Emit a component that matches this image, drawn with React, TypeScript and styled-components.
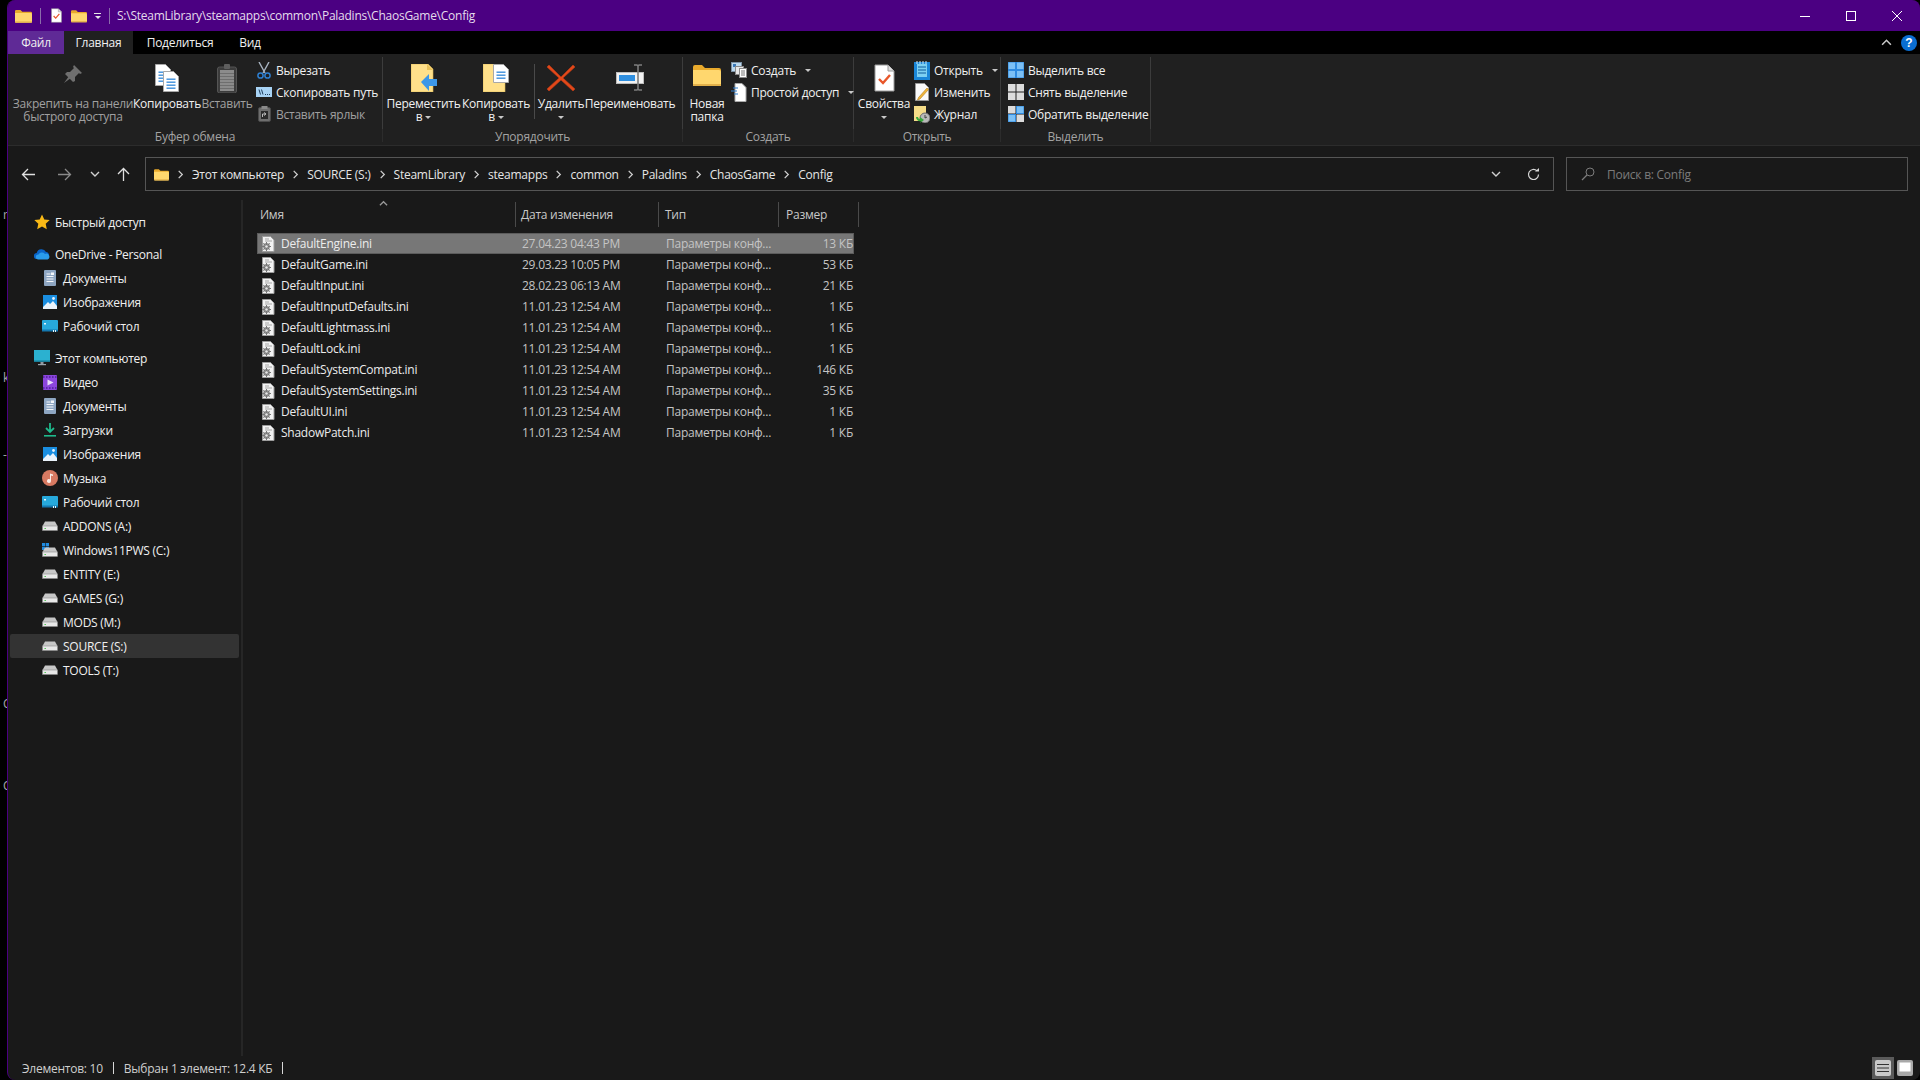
import styled, { createGlobalStyle } from "styled-components";
import type { ReactNode } from "react";

const GlobalStyle = createGlobalStyle`
  html, body {
    margin: 0;
    width: 1920px;
    height: 1080px;
    overflow: hidden;
    background: #000;
    font-family: "Open Sans", "Noto Sans", "Liberation Sans", sans-serif;
    font-size: 12px;
    letter-spacing: -0.25px;
    color: #e6e6e6;
  }
`;

/* ---------- icons ---------- */

const Glyph = styled.svg`
  display: block;
  flex-shrink: 0;
`;

const Icon = ({ w, h, children }: { w: number; h: number; children: ReactNode }) => (
  <Glyph width={w} height={h} viewBox={`0 0 ${w} ${h}`}>
    {children}
  </Glyph>
);

const FolderIcon = ({ w = 17, h = 14 }: { w?: number; h?: number }) => (
  <Glyph width={w} height={h} viewBox="0 0 28 22">
    <path d="M0 3a2 2 0 0 1 2-2h7l3 3h14a2 2 0 0 1 2 2v2H0z" fill="#e8a92c" />
    <path d="M0 6h26a2 2 0 0 1 2 2v12a2 2 0 0 1-2 2H2a2 2 0 0 1-2-2z" fill="#ffd76e" />
    <rect y="20" width="28" height="2" fill="#e2b04a" />
  </Glyph>
);

const DocCheckIcon = ({ w, h }: { w: number; h: number }) => (
  <Glyph width={w} height={h} viewBox="0 0 21 28">
    <path d="M1 1h13l6 6v20H1z" fill="#fff" stroke="#9a9a9a" />
    <path d="M14 1v6h6" fill="#ddd" stroke="#9a9a9a" />
    <path d="M5 15l4 4 7-8" fill="none" stroke="#e8562a" strokeWidth="2.4" />
  </Glyph>
);

const PinIcon = () => (
  <Icon w={20} h={20}>
    <path d="M11 1l8 8-2 1-1-1-4 4 0 4-2 1-8-8 2-2 3 0 4-4-1-1z" fill="#6f6f6f" />
    <path d="M6 12l-5 7 7-5z" fill="#6f6f6f" />
  </Icon>
);

const DocLines = ({ x, y, w, h }: { x: number; y: number; w: number; h: number }) => (
  <g>
    <path d={`M${x} ${y}h${w - 5}l5 5v${h - 5}h-${w}z`} fill="#fff" stroke="#a8a8a8" />
    {[7, 10, 13, 16, 19, 22, 25].filter((d) => d < h - 2).map((d) => (
      <rect key={d} x={x + 3} y={y + d} width={w - 6} height="1.4" fill="#3f8fdc" />
    ))}
  </g>
);

const CopyIcon = () => (
  <Icon w={24} h={28}>
    <DocLines x={0.5} y={0.5} w={15} h={21} />
    <DocLines x={8.5} y={7.5} w={15} h={20} />
  </Icon>
);

const ClipboardIcon = () => (
  <Icon w={20} h={29}>
    <rect x="0.5" y="3" width="19" height="26" rx="2" fill="#3c3c3c" stroke="#555" />
    <rect x="3" y="6" width="14" height="21" fill="#8b8b8b" />
    {[9, 12, 15, 18, 21, 24].map((y) => (
      <rect key={y} x="3" y={y} width="14" height="1" fill="#6e6e6e" />
    ))}
    <rect x="7" y="0" width="6" height="5" rx="1" fill="#5e5e5e" />
  </Icon>
);

const ScissorsIcon = () => (
  <Icon w={14} h={17}>
    <path d="M2 0l6 11M12 0L6 11" stroke="#a9b4c2" strokeWidth="1.4" fill="none" />
    <circle cx="3.5" cy="13.5" r="2.6" fill="none" stroke="#2e7fd0" strokeWidth="1.5" />
    <circle cx="10.5" cy="13.5" r="2.6" fill="none" stroke="#2e7fd0" strokeWidth="1.5" />
  </Icon>
);

const CopyPathIcon = () => (
  <Icon w={16} h={10}>
    <rect width="16" height="10" fill="#a8d3f5" />
    <path d="M3 2.5l1.5 5M5.5 2.5l1.5 5" stroke="#1d3d5c" strokeWidth="1" />
    <path d="M9 7.5h1M11 7.5h1M13 7.5h1" stroke="#1d3d5c" strokeWidth="1" />
  </Icon>
);

const ShortcutPasteIcon = () => (
  <Icon w={13} h={16}>
    <rect x="0.5" y="1.5" width="12" height="14" rx="1.5" fill="#6e6e6e" stroke="#4a4a4a" />
    <rect x="3.5" y="0" width="6" height="3" fill="#8a8a8a" />
    <rect x="3" y="5" width="7" height="8" fill="#2b2b2b" />
    <path d="M4.5 11V8h3M6 6.5L8 8 6 9.5" stroke="#bbb" fill="none" />
  </Icon>
);

const YellowDoc = () => (
  <path d="M0 0h17l5 5v23H0z" fill="#ffe08a" stroke="#d9b552" strokeWidth="0.6" />
);

const MoveToIcon = () => (
  <Icon w={26} h={28}>
    <YellowDoc />
    <path d="M16 0v6h6" fill="#e9c25a" />
    <path d="M10 18l8-8v5h8v7h-8v5z" fill="#3c97e8" />
  </Icon>
);

const CopyToIcon = () => (
  <Icon w={26} h={28}>
    <YellowDoc />
    <DocLines x={10.5} y={0.5} w={15} h={18} />
  </Icon>
);

const DeleteIcon = () => (
  <Icon w={28} h={28}>
    <path d="M2 1l12 12L26 1l2 2-12 11 12 11-2 2-12-11L2 27l-2-2 12-11L0 3z" fill="#e2481a" stroke="#c23c14" strokeWidth="0.6" />
  </Icon>
);

const RenameIcon = () => (
  <Icon w={28} h={27}>
    <rect x="0.5" y="8.5" width="27" height="11" fill="#f2f2f2" stroke="#bdbdbd" />
    <rect x="3" y="11" width="16" height="6" fill="#2f8fe0" />
    <path d="M18 1h3l1 1 1-1h3M22 2v23M18 26h3l1-1 1 1h3" stroke="#7d7d7d" strokeWidth="1.6" fill="none" />
  </Icon>
);

const NewItemIcon = () => (
  <Icon w={16} h={16}>
    <rect x="0.5" y="0.5" width="10" height="9" fill="#bcd9ee" stroke="#7e93a5" />
    <rect x="2" y="2" width="3" height="3" fill="#3a78b8" />
    <rect x="4.5" y="4.5" width="8" height="8" fill="#e8e8e8" stroke="#8a8a8a" />
    <rect x="8.5" y="6.5" width="7" height="9" fill="#fff" stroke="#8a8a8a" />
    <path d="M10 9h4M10 11h4M10 13h4" stroke="#777" />
  </Icon>
);

const EasyAccessIcon = () => (
  <Icon w={16} h={19}>
    <path d="M4 0.5h7l4 4v14H4z" fill="#fff" stroke="#aaa" />
    <path d="M2 5h5M0 8h6M3 11h4" stroke="#2e7fd0" strokeWidth="1.2" />
  </Icon>
);

const OpenIcon = () => (
  <Icon w={16} h={19}>
    <rect y="1" width="16" height="18" fill="#1a86d8" />
    <rect x="3" y="3" width="10" height="13" fill="#7dd0f2" />
    <path d="M4 6h8M4 9h8M4 12h8" stroke="#0f5c9e" />
    <path d="M3 0v3M6 0v3M9 0v3M12 0v3" stroke="#cfe8f8" />
  </Icon>
);

const EditIcon = () => (
  <Icon w={14} h={18}>
    <path d="M0.5 0.5h9l4 4v13h-13z" fill="#fafafa" stroke="#9a9a9a" />
    <path d="M12 5l1.5 1.5L5 16l-2.5 1 1-2.5z" fill="#f1b63b" stroke="#b07e1f" strokeWidth="0.6" />
  </Icon>
);

const HistoryIcon = () => (
  <Icon w={16} h={17}>
    <rect x="0" y="0" width="12" height="15" fill="#f5dc88" />
    <circle cx="11" cy="12" r="5" fill="#b9b9b9" stroke="#6b6b6b" />
    <path d="M11 9v3l2-1" stroke="#444" fill="none" />
    <path d="M2 11a4 4 0 0 0 5 4l-1 2 4-3-4-3 0 2a2 2 0 0 1-2-2z" fill="#37a83a" />
  </Icon>
);

const GridIcon = ({ cells }: { cells: string[] }) => (
  <Icon w={16} h={16}>
    {cells.map((c, i) => (
      <rect key={i} x={(i % 2) * 8.5} y={Math.floor(i / 2) * 8.5} width="7.5" height="7.5" fill={c} stroke={c === "#dcdcdc" ? "none" : "#2e8ae0"} />
    ))}
  </Icon>
);

const Caret = styled.span`
  display: inline-block;
  width: 0;
  height: 0;
  border-left: 3px solid transparent;
  border-right: 3px solid transparent;
  border-top: 3px solid #c8c8c8;
  margin-left: 5px;
  vertical-align: 2px;
`;

const BigCaret = styled(Caret)`
  margin-left: 0;
`;

const ChevronGlyph = ({ dir, size = 10, color = "#d0d0d0" }: { dir: "right" | "down" | "up"; size?: number; color?: string }) => {
  const d = dir === "right" ? "M3 1l4 4-4 4" : dir === "down" ? "M1 3l4 4 4-4" : "M1 7l4-4 4 4";
  return (
    <Glyph width={size} height={size} viewBox="0 0 10 10">
      <path d={d} fill="none" stroke={color} strokeWidth="1.4" />
    </Glyph>
  );
};

const ArrowGlyph = ({ dir, color }: { dir: "left" | "right" | "up"; color: string }) => {
  const d =
    dir === "left"
      ? "M14 7.5H2M7 2L1.5 7.5 7 13"
      : dir === "right"
        ? "M1 7.5h12M8 2l5.5 5.5L8 13"
        : "M7.5 14V2M2 7l5.5-5.5L13 7";
  return (
    <Glyph width={15} height={15} viewBox="0 0 15 15">
      <path d={d} fill="none" stroke={color} strokeWidth="1.3" />
    </Glyph>
  );
};

const StarIcon = () => (
  <Icon w={16} h={16}>
    <path d="M8 0.5l2.3 5 5.4.6-4 3.7 1.1 5.4L8 12.5l-4.8 2.7 1.1-5.4-4-3.7 5.4-.6z" fill="#f9b916" />
  </Icon>
);

const CloudIcon = () => (
  <Icon w={16} h={12}>
    <path d="M3 11a3 3 0 0 1-.3-6A5 5 0 0 1 12 4a3.6 3.6 0 0 1 .6 7z" fill="#0a64c8" />
    <path d="M4 11.5a2.5 2.5 0 0 1 .5-5A4 4 0 0 1 11 6a2.8 2.8 0 0 1 2.6 5.5z" fill="#2a9bea" />
  </Icon>
);

const DocsIcon = () => (
  <Icon w={12} h={16}>
    <rect width="12" height="16" rx="1" fill="#8ea6c2" />
    <path d="M2.5 4h4M2.5 6.5h7M2.5 9h7M2.5 11.5h7" stroke="#f4f6f9" strokeWidth="1.1" />
    <rect x="7" y="2.5" width="3" height="2.5" fill="#f4f6f9" />
  </Icon>
);

const PicturesIcon = () => (
  <Icon w={14} h={14}>
    <rect width="14" height="14" fill="#1a8ee0" />
    <path d="M0 14V12l5-5 2 2 3-3 4 5v3z" fill="#eaf3fb" />
    <circle cx="10.5" cy="3.5" r="1.4" fill="#eaf3fb" />
  </Icon>
);

const DesktopIcon = () => (
  <Icon w={16} h={12}>
    <rect width="16" height="11" rx="1" fill="#27a9dc" />
    <rect y="9.5" width="16" height="2" fill="#1478b0" />
    <rect x="2" y="3" width="2" height="1.5" fill="#e6f6fc" />
    <rect x="11" y="10" width="1" height="2" fill="#e6f6fc" />
    <rect x="13" y="10" width="1" height="2" fill="#e6f6fc" />
  </Icon>
);

const MonitorIcon = () => (
  <Icon w={16} h={16}>
    <rect width="16" height="11.5" fill="#2bb1d0" />
    <rect y="10.5" width="16" height="1.5" fill="#177c96" />
    <rect x="6.5" y="12" width="3" height="2.5" fill="#8f9aa3" />
    <rect x="4" y="14" width="8" height="1.2" fill="#9aa4ac" />
  </Icon>
);

const VideoIcon = () => (
  <Icon w={14} h={15}>
    <rect width="14" height="15" rx="1" fill="#8b46dc" />
    <path d="M0 2h14M0 13h14" stroke="#4f1f96" strokeDasharray="1.5 1.5" strokeWidth="1.4" />
    <path d="M4.5 4.5v6l6-3z" fill="#e9ddf8" />
  </Icon>
);

const DownloadIcon = () => (
  <Icon w={12} h={14}>
    <path d="M6 0v9M2 5l4 4 4-4" stroke="#1fb98c" strokeWidth="1.8" fill="none" />
    <rect y="12" width="12" height="1.6" fill="#1fb98c" />
  </Icon>
);

const MusicIcon = () => (
  <Icon w={16} h={16}>
    <circle cx="8" cy="8" r="8" fill="#d87a62" />
    <path d="M8 3.5l3 1v1.6L9 5.5V11a2 2 0 1 1-1-1.7z" fill="#fbeee9" />
  </Icon>
);

const DriveIcon = ({ system }: { system?: boolean }) => (
  <Icon w={16} h={system ? 14 : 10}>
    {system && (
      <g fill="#1f8be0">
        <rect x="0" y="0" width="3.2" height="3.2" />
        <rect x="3.8" y="0" width="3.2" height="3.2" />
        <rect x="0" y="3.8" width="3.2" height="3.2" />
        <rect x="3.8" y="3.8" width="3.2" height="3.2" />
      </g>
    )}
    <g transform={system ? "translate(0 4)" : undefined}>
      <path d="M3 0.5h10L15.5 5v0H.5z" fill="#c7c7c7" />
      <rect x="0.5" y="5" width="15" height="4.5" fill="#e8e8e8" stroke="#8a8a8a" strokeWidth="0.6" />
      <rect x="2.5" y="7" width="1.4" height="1" fill="#47c24d" />
    </g>
  </Icon>
);

const IniIcon = () => (
  <Icon w={14} h={16}>
    <path d="M1.5 0.5h8l3.5 3.5v11.5H1.5z" fill="#f2f2f2" stroke="#9c9c9c" />
    <path d="M4 3h4M4 5h7" stroke="#a6a6a6" />
    <circle cx="5.5" cy="10.5" r="3.4" fill="#8d8d8d" />
    <circle cx="5.5" cy="10.5" r="1.3" fill="#e8e8e8" />
    <path d="M5.5 6v9M1 10.5h9M2.3 7.3l6.4 6.4M8.7 7.3l-6.4 6.4" stroke="#777" />
    <circle cx="5.5" cy="10.5" r="1.3" fill="#e8e8e8" />
  </Icon>
);

/* ---------- desktop shell ---------- */

const Desktop = styled.div`
  display: flex;
  width: 1920px;
  height: 1080px;
  background: #000;
`;

const BehindStrip = styled.div`
  width: 7px;
  flex-shrink: 0;
  overflow: hidden;
  display: flex;
  flex-direction: column;
`;

const StrayMark = styled.span<{ $gap: number }>`
  display: block;
  height: 14px;
  line-height: 14px;
  margin-top: ${(p) => p.$gap}px;
  padding-left: 3px;
  color: #a8a8a8;
  font-size: 12px;
`;

const Window = styled.div`
  flex: 1;
  min-width: 0;
  display: flex;
  flex-direction: column;
  background: #191919;
  border-left: 1px solid #4b0082;
  border-radius: 8px 8px 8px 8px;
  overflow: hidden;
`;

/* ---------- title bar ---------- */

const TitleBar = styled.div`
  height: 31px;
  flex-shrink: 0;
  display: flex;
  align-items: center;
  background: #4b0082;
  color: #e4dcec;
`;

const QuickSlot = styled.div<{ $ml: number }>`
  margin-left: ${(p) => p.$ml}px;
  display: flex;
  align-items: center;
`;

const QuickSep = styled.div<{ $ml: number }>`
  width: 1px;
  height: 16px;
  background: #8a6cab;
  margin-left: ${(p) => p.$ml}px;
`;

const QuickDrop = styled.div`
  width: 7px;
  margin-left: 7px;
  border-top: 1px solid #e6e6e6;
  padding-top: 2px;
  display: flex;
  justify-content: center;
  &::after {
    content: "";
    border-left: 3px solid transparent;
    border-right: 3px solid transparent;
    border-top: 3px solid #e6e6e6;
  }
`;

const TitleText = styled.span`
  margin-left: 7px;
  font-size: 12px;
`;

const WindowControls = styled.div`
  margin-left: auto;
  display: flex;
  height: 100%;
`;

const ControlButton = styled.div`
  width: 46px;
  display: flex;
  align-items: center;
  justify-content: center;
`;

/* ---------- tabs ---------- */

const TabRow = styled.div`
  height: 23px;
  flex-shrink: 0;
  display: flex;
  align-items: center;
  background: #000;
`;

const Tab = styled.div<{ $w: number; $kind?: "file" | "active" }>`
  width: ${(p) => p.$w}px;
  height: 100%;
  display: flex;
  align-items: center;
  justify-content: center;
  color: #f0f0f0;
  background: ${(p) => (p.$kind === "file" ? "#5f2a96" : p.$kind === "active" ? "#202020" : "transparent")};
`;

const TabRight = styled.div`
  margin-left: auto;
  padding-right: 3px;
  display: flex;
  align-items: center;
  gap: 9px;
`;

const HelpBadge = styled.div`
  width: 16px;
  height: 16px;
  border-radius: 50%;
  background: #0a6ed1;
  color: #fff;
  font: bold 12px/16px "Liberation Sans", sans-serif;
  letter-spacing: 0;
  text-align: center;
`;

/* ---------- ribbon ---------- */

const Ribbon = styled.div`
  height: 92px;
  box-sizing: border-box;
  flex-shrink: 0;
  display: flex;
  padding-top: 3px;
  background: #202020;
  border-bottom: 1px solid #2c2c2c;
`;

const Group = styled.div<{ $w: number }>`
  width: ${(p) => p.$w}px;
  height: 85px;
  display: flex;
  flex-direction: column;
`;

const GroupBody = styled.div<{ $pl?: number }>`
  height: 72px;
  box-sizing: border-box;
  padding-left: ${(p) => p.$pl ?? 0}px;
  display: flex;
  border-right: 1px solid #3c3c3c;
`;

const GroupLabel = styled.div`
  height: 13px;
  line-height: 16px;
  text-align: center;
  color: #a3a3a3;
  border-right: 1px solid #2c2c2c;
`;

const BigButton = styled.div<{ $w: number; $dim?: boolean }>`
  width: ${(p) => p.$w}px;
  flex-shrink: 0;
  display: flex;
  flex-direction: column;
  align-items: center;
  color: ${(p) => (p.$dim ? "#a0a0a0" : "#f0f0f0")};
`;

const BigIconSlot = styled.div`
  height: 40px;
  box-sizing: border-box;
  padding-top: 7px;
`;

const BigLabel = styled.div`
  line-height: 13px;
  text-align: center;
  white-space: nowrap;
`;

const RibbonDivider = styled.div`
  width: 1px;
  height: 55px;
  margin: 7px 3px 0;
  background: #4a4a4a;
  flex-shrink: 0;
`;

const SmallColumn = styled.div<{ $ml?: number }>`
  margin-left: ${(p) => p.$ml ?? 0}px;
  padding-top: 2px;
  display: flex;
  flex-direction: column;
`;

const SmallItem = styled.div<{ $dim?: boolean }>`
  height: 22px;
  display: flex;
  align-items: center;
  gap: 4px;
  white-space: nowrap;
  color: ${(p) => (p.$dim ? "#a0a0a0" : "#f0f0f0")};
`;

const SmallIconSlot = styled.div`
  width: 16px;
  display: flex;
  justify-content: center;
`;

/* ---------- navigation ---------- */

const NavBar = styled.div`
  height: 54px;
  box-sizing: border-box;
  flex-shrink: 0;
  padding: 11px 12px 9px 0;
  display: flex;
  align-items: center;
`;

const NavButton = styled.div<{ $w: number }>`
  width: ${(p) => p.$w}px;
  display: flex;
  justify-content: center;
  flex-shrink: 0;
`;

const AddressBox = styled.div`
  flex: 1;
  height: 34px;
  box-sizing: border-box;
  margin-left: 9px;
  padding-left: 8px;
  display: flex;
  align-items: center;
  border: 1px solid #555;
`;

const CrumbSep = styled.div`
  width: 23px;
  display: flex;
  justify-content: center;
`;

const Crumb = styled.span`
  color: #e6e6e6;
  white-space: nowrap;
`;

const AddressEnd = styled.div`
  margin-left: auto;
  display: flex;
  align-items: center;
`;

const AddressEndButton = styled.div<{ $w: number }>`
  width: ${(p) => p.$w}px;
  display: flex;
  justify-content: center;
`;

const SearchBox = styled.div`
  width: 342px;
  height: 34px;
  box-sizing: border-box;
  margin-left: 12px;
  padding-left: 14px;
  display: flex;
  align-items: center;
  gap: 12px;
  border: 1px solid #555;
  color: #7c7c7c;
`;

/* ---------- body ---------- */

const Body = styled.div`
  flex: 1;
  min-height: 0;
  display: flex;
`;

const Sidebar = styled.div`
  width: 233px;
  box-sizing: content-box;
  flex-shrink: 0;
  padding: 10px 0 0;
  border-right: 2px solid #262626;
`;

const NavSection = styled.div`
  margin-bottom: 8px;
  padding: 0 2px;
`;

const NavRow = styled.div<{ $child?: boolean; $selected?: boolean }>`
  height: 24px;
  display: flex;
  align-items: center;
  gap: 5px;
  padding-left: ${(p) => (p.$child ? 32 : 24)}px;
  border-radius: 2px;
  white-space: nowrap;
  color: #f0f0f0;
  background: ${(p) => (p.$selected ? "#333" : "transparent")};
`;

const NavIconSlot = styled.div`
  width: 16px;
  display: flex;
  justify-content: center;
`;

const ListPane = styled.div`
  flex: 1;
  min-width: 0;
  padding: 2px 0 0 14px;
`;

const ListHeader = styled.div`
  display: grid;
  grid-template-columns: 259px 143px 120px 80px;
  width: 602px;
  height: 25px;
`;

const HeaderCell = styled.div<{ $pad: number }>`
  position: relative;
  padding-left: ${(p) => p.$pad}px;
  display: flex;
  align-items: center;
  color: #c8c8c8;
  border-right: 1px solid #4a4a4a;
`;

const SortArrow = styled.div`
  position: absolute;
  left: 122px;
  top: -3px;
`;

const Rows = styled.div`
  margin-top: 6px;
  width: 597px;
`;

const FileRow = styled.div<{ $selected?: boolean }>`
  display: grid;
  grid-template-columns: 259px 144px 120px 74px;
  height: 21px;
  box-sizing: border-box;
  align-items: center;
  white-space: nowrap;
  background: ${(p) => (p.$selected ? "#777" : "transparent")};
  border: 1px solid ${(p) => (p.$selected ? "#5c5c5c" : "transparent")};
`;

const NameCell = styled.div`
  display: flex;
  align-items: center;
  gap: 6px;
  padding-left: 3px;
  color: #ececec;
`;

const FileMeta = styled.div`
  padding-left: 5px;
  color: #c4c4c4;
`;

const FileSize = styled.div`
  padding-right: 2px;
  text-align: right;
  color: #c4c4c4;
`;

/* ---------- status ---------- */

const StatusBar = styled.div`
  height: 24px;
  flex-shrink: 0;
  padding: 0 7px 0 14px;
  display: flex;
  align-items: center;
  color: #cfcfcf;
`;

const StatusDivider = styled.div`
  width: 1px;
  height: 12px;
  margin: 0 10px;
  background: #d8d8d8;
`;

const ViewButtons = styled.div`
  margin-left: auto;
  display: flex;
  align-items: center;
  gap: 3px;
`;

const ViewButton = styled.div<{ $active?: boolean }>`
  width: ${(p) => (p.$active ? 22 : 16)}px;
  height: ${(p) => (p.$active ? 22 : 16)}px;
  display: flex;
  align-items: center;
  justify-content: center;
  background: ${(p) => (p.$active ? "#5a5a5a" : "transparent")};
`;

/* ---------- data ---------- */

type NavItem = { label: string; icon: ReactNode; selected?: boolean };

const drive = <DriveIcon />;

const NAV_SECTIONS: { head: NavItem; children: NavItem[] }[] = [
  { head: { label: "Быстрый доступ", icon: <StarIcon /> }, children: [] },
  {
    head: { label: "OneDrive - Personal", icon: <CloudIcon /> },
    children: [
      { label: "Документы", icon: <DocsIcon /> },
      { label: "Изображения", icon: <PicturesIcon /> },
      { label: "Рабочий стол", icon: <DesktopIcon /> },
    ],
  },
  {
    head: { label: "Этот компьютер", icon: <MonitorIcon /> },
    children: [
      { label: "Видео", icon: <VideoIcon /> },
      { label: "Документы", icon: <DocsIcon /> },
      { label: "Загрузки", icon: <DownloadIcon /> },
      { label: "Изображения", icon: <PicturesIcon /> },
      { label: "Музыка", icon: <MusicIcon /> },
      { label: "Рабочий стол", icon: <DesktopIcon /> },
      { label: "ADDONS (A:)", icon: drive },
      { label: "Windows11PWS (C:)", icon: <DriveIcon system /> },
      { label: "ENTITY (E:)", icon: drive },
      { label: "GAMES (G:)", icon: drive },
      { label: "MODS (M:)", icon: drive },
      { label: "SOURCE (S:)", icon: drive, selected: true },
      { label: "TOOLS (T:)", icon: drive },
    ],
  },
];

const FILES = [
  { name: "DefaultEngine.ini", date: "27.04.23 04:43 PM", size: "13 КБ" },
  { name: "DefaultGame.ini", date: "29.03.23 10:05 PM", size: "53 КБ" },
  { name: "DefaultInput.ini", date: "28.02.23 06:13 AM", size: "21 КБ" },
  { name: "DefaultInputDefaults.ini", date: "11.01.23 12:54 AM", size: "1 КБ" },
  { name: "DefaultLightmass.ini", date: "11.01.23 12:54 AM", size: "1 КБ" },
  { name: "DefaultLock.ini", date: "11.01.23 12:54 AM", size: "1 КБ" },
  { name: "DefaultSystemCompat.ini", date: "11.01.23 12:54 AM", size: "146 КБ" },
  { name: "DefaultSystemSettings.ini", date: "11.01.23 12:54 AM", size: "35 КБ" },
  { name: "DefaultUI.ini", date: "11.01.23 12:54 AM", size: "1 КБ" },
  { name: "ShadowPatch.ini", date: "11.01.23 12:54 AM", size: "1 КБ" },
];

const CRUMBS = ["Этот компьютер", "SOURCE (S:)", "SteamLibrary", "steamapps", "common", "Paladins", "ChaosGame", "Config"];

const BLUE = "#7cc0f5";
const GRAY = "#dcdcdc";

function App() {
  return (
    <Desktop>
      <GlobalStyle />
      <BehindStrip>
        <StrayMark $gap={208}>r</StrayMark>
        <StrayMark $gap={149}>k</StrayMark>
        <StrayMark $gap={63}>-</StrayMark>
        <StrayMark $gap={235}>C</StrayMark>
        <StrayMark $gap={68}>C</StrayMark>
      </BehindStrip>
      <Window>
        <TitleBar>
          <QuickSlot $ml={7}>
            <FolderIcon />
          </QuickSlot>
          <QuickSep $ml={8} />
          <QuickSlot $ml={10}>
            <DocCheckIcon w={11} h={17} />
          </QuickSlot>
          <QuickSlot $ml={9}>
            <FolderIcon w={16} h={14} />
          </QuickSlot>
          <QuickDrop />
          <QuickSep $ml={8} />
          <TitleText>S:\SteamLibrary\steamapps\common\Paladins\ChaosGame\Config</TitleText>
          <WindowControls>
            <ControlButton>
              <Icon w={10} h={10}>
                <path d="M0 5.5h10" stroke="#fff" />
              </Icon>
            </ControlButton>
            <ControlButton>
              <Icon w={10} h={10}>
                <rect x="0.5" y="0.5" width="9" height="9" fill="none" stroke="#fff" />
              </Icon>
            </ControlButton>
            <ControlButton>
              <Icon w={10} h={10}>
                <path d="M0 0l10 10M10 0L0 10" stroke="#fff" />
              </Icon>
            </ControlButton>
          </WindowControls>
        </TitleBar>

        <TabRow>
          <Tab $w={56} $kind="file">Файл</Tab>
          <Tab $w={69} $kind="active">Главная</Tab>
          <Tab $w={94}>Поделиться</Tab>
          <Tab $w={46}>Вид</Tab>
          <TabRight>
            <ChevronGlyph dir="up" size={11} color="#c8c8c8" />
            <HelpBadge>?</HelpBadge>
          </TabRight>
        </TabRow>

        <Ribbon>
          <Group $w={375}>
            <GroupBody $pl={3}>
              <BigButton $w={124} $dim>
                <BigIconSlot><PinIcon /></BigIconSlot>
                <BigLabel>Закрепить на панели<br />быстрого доступа</BigLabel>
              </BigButton>
              <BigButton $w={64}>
                <BigIconSlot><CopyIcon /></BigIconSlot>
                <BigLabel>Копировать</BigLabel>
              </BigButton>
              <BigButton $w={56} $dim>
                <BigIconSlot><ClipboardIcon /></BigIconSlot>
                <BigLabel>Вставить</BigLabel>
              </BigButton>
              <SmallColumn $ml={1}>
                <SmallItem><SmallIconSlot><ScissorsIcon /></SmallIconSlot>Вырезать</SmallItem>
                <SmallItem><SmallIconSlot><CopyPathIcon /></SmallIconSlot>Скопировать путь</SmallItem>
                <SmallItem $dim><SmallIconSlot><ShortcutPasteIcon /></SmallIconSlot>Вставить ярлык</SmallItem>
              </SmallColumn>
            </GroupBody>
            <GroupLabel>Буфер обмена</GroupLabel>
          </Group>

          <Group $w={300}>
            <GroupBody $pl={3}>
              <BigButton $w={75}>
                <BigIconSlot><MoveToIcon /></BigIconSlot>
                <BigLabel>Переместить<br />в <BigCaret /></BigLabel>
              </BigButton>
              <BigButton $w={70}>
                <BigIconSlot><CopyToIcon /></BigIconSlot>
                <BigLabel>Копировать<br />в <BigCaret /></BigLabel>
              </BigButton>
              <RibbonDivider />
              <BigButton $w={46}>
                <BigIconSlot><DeleteIcon /></BigIconSlot>
                <BigLabel>Удалить<br /><BigCaret /></BigLabel>
              </BigButton>
              <BigButton $w={92}>
                <BigIconSlot><RenameIcon /></BigIconSlot>
                <BigLabel>Переименовать</BigLabel>
              </BigButton>
            </GroupBody>
            <GroupLabel>Упорядочить</GroupLabel>
          </Group>

          <Group $w={171}>
            <GroupBody>
              <BigButton $w={48}>
                <BigIconSlot><FolderIcon w={28} h={22} /></BigIconSlot>
                <BigLabel>Новая<br />папка</BigLabel>
              </BigButton>
              <SmallColumn>
                <SmallItem><SmallIconSlot><NewItemIcon /></SmallIconSlot>Создать<Caret /></SmallItem>
                <SmallItem><SmallIconSlot><EasyAccessIcon /></SmallIconSlot>Простой доступ<Caret /></SmallItem>
              </SmallColumn>
            </GroupBody>
            <GroupLabel>Создать</GroupLabel>
          </Group>

          <Group $w={147}>
            <GroupBody>
              <BigButton $w={60}>
                <BigIconSlot><DocCheckIcon w={21} h={28} /></BigIconSlot>
                <BigLabel>Свойства<br /><BigCaret /></BigLabel>
              </BigButton>
              <SmallColumn>
                <SmallItem><SmallIconSlot><OpenIcon /></SmallIconSlot>Открыть<Caret /></SmallItem>
                <SmallItem><SmallIconSlot><EditIcon /></SmallIconSlot>Изменить</SmallItem>
                <SmallItem><SmallIconSlot><HistoryIcon /></SmallIconSlot>Журнал</SmallItem>
              </SmallColumn>
            </GroupBody>
            <GroupLabel>Открыть</GroupLabel>
          </Group>

          <Group $w={150}>
            <GroupBody $pl={7}>
              <SmallColumn>
                <SmallItem><SmallIconSlot><GridIcon cells={[BLUE, BLUE, BLUE, BLUE]} /></SmallIconSlot>Выделить все</SmallItem>
                <SmallItem><SmallIconSlot><GridIcon cells={[GRAY, GRAY, GRAY, GRAY]} /></SmallIconSlot>Снять выделение</SmallItem>
                <SmallItem><SmallIconSlot><GridIcon cells={[GRAY, BLUE, BLUE, GRAY]} /></SmallIconSlot>Обратить выделение</SmallItem>
              </SmallColumn>
            </GroupBody>
            <GroupLabel>Выделить</GroupLabel>
          </Group>
        </Ribbon>

        <NavBar>
          <NavButton $w={40}><ArrowGlyph dir="left" color="#e0e0e0" /></NavButton>
          <NavButton $w={32}><ArrowGlyph dir="right" color="#8a8a8a" /></NavButton>
          <NavButton $w={30}><ChevronGlyph dir="down" /></NavButton>
          <NavButton $w={26}><ArrowGlyph dir="up" color="#e0e0e0" /></NavButton>
          <AddressBox>
            <FolderIcon w={15} h={13} />
            {CRUMBS.map((c) => (
              <Crumb key={c} as="div" style={{ display: "contents" }}>
                <CrumbSep><ChevronGlyph dir="right" size={9} /></CrumbSep>
                <Crumb>{c}</Crumb>
              </Crumb>
            ))}
            <AddressEnd>
              <AddressEndButton $w={34}><ChevronGlyph dir="down" /></AddressEndButton>
              <AddressEndButton $w={40}>
                <Icon w={13} h={13}>
                  <path d="M11.5 6.5a5 5 0 1 1-1.6-3.7" fill="none" stroke="#d8d8d8" strokeWidth="1.2" />
                  <path d="M8 3.4h4V0z" fill="#d8d8d8" />
                </Icon>
              </AddressEndButton>
            </AddressEnd>
          </AddressBox>
          <SearchBox>
            <Icon w={14} h={14}>
              <circle cx="9" cy="5" r="4" fill="none" stroke="#7c7c7c" />
              <path d="M6 8l-5 5" stroke="#7c7c7c" strokeWidth="1.2" />
            </Icon>
            Поиск в: Config
          </SearchBox>
        </NavBar>

        <Body>
          <Sidebar>
            {NAV_SECTIONS.map((section) => (
              <NavSection key={section.head.label}>
                <NavRow>
                  <NavIconSlot>{section.head.icon}</NavIconSlot>
                  {section.head.label}
                </NavRow>
                {section.children.map((item) => (
                  <NavRow key={item.label} $child $selected={item.selected}>
                    <NavIconSlot>{item.icon}</NavIconSlot>
                    {item.label}
                  </NavRow>
                ))}
              </NavSection>
            ))}
          </Sidebar>

          <ListPane>
            <ListHeader>
              <HeaderCell $pad={3}>
                Имя
                <SortArrow><ChevronGlyph dir="up" size={9} color="#9a9a9a" /></SortArrow>
              </HeaderCell>
              <HeaderCell $pad={5}>Дата изменения</HeaderCell>
              <HeaderCell $pad={6}>Тип</HeaderCell>
              <HeaderCell $pad={7}>Размер</HeaderCell>
            </ListHeader>
            <Rows>
              {FILES.map((f, i) => (
                <FileRow key={f.name} $selected={i === 0}>
                  <NameCell><IniIcon />{f.name}</NameCell>
                  <FileMeta>{f.date}</FileMeta>
                  <FileMeta>Параметры конф...</FileMeta>
                  <FileSize>{f.size}</FileSize>
                </FileRow>
              ))}
            </Rows>
          </ListPane>
        </Body>

        <StatusBar>
          Элементов: 10
          <StatusDivider />
          Выбран 1 элемент: 12.4 КБ
          <StatusDivider />
          <ViewButtons>
            <ViewButton $active>
              <Icon w={16} h={16}>
                <rect width="16" height="16" rx="2" fill="#c9c9c9" />
                <path d="M2 4.5h12M2 8h12M2 11.5h12" stroke="#333" />
              </Icon>
            </ViewButton>
            <ViewButton>
              <Icon w={16} h={16}>
                <rect width="16" height="16" rx="2" fill="#a8a8a8" />
                <rect x="2.5" y="2.5" width="11" height="9" fill="#fff" />
              </Icon>
            </ViewButton>
          </ViewButtons>
        </StatusBar>
      </Window>
    </Desktop>
  );
}

export default App;
